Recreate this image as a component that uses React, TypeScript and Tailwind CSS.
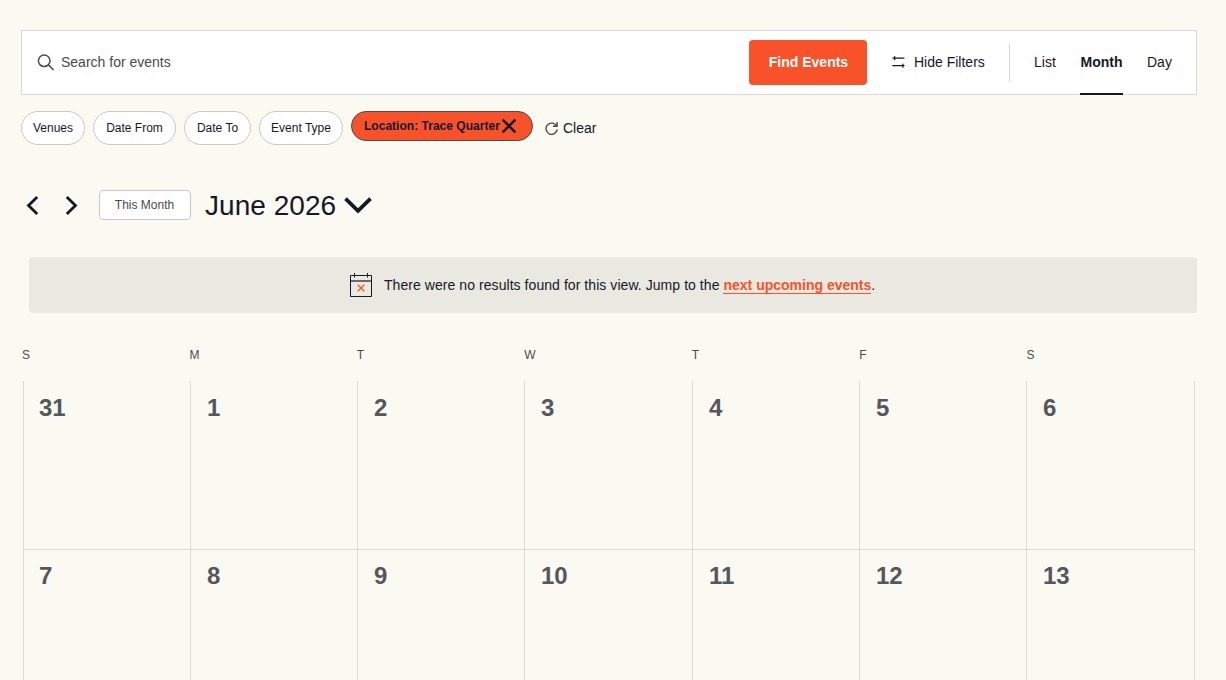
import React from "react";

const filters = [
  { label: "Venues", width: "w-[64px]" },
  { label: "Date From", width: "w-[83px]" },
  { label: "Date To", width: "w-[67px]" },
  { label: "Event Type", width: "w-[84px]" },
];
const weekdays = ["S", "M", "T", "W", "T", "F", "S"];
const weeks = [
  [31, 1, 2, 3, 4, 5, 6],
  [7, 8, 9, 10, 11, 12, 13],
];

function SearchIcon() {
  return (
    <svg className="ml-[15px] size-[18px] shrink-0" viewBox="0 0 18 18" fill="none" stroke="#4a4a4a" strokeWidth="1.5">
      <circle cx="7.2" cy="6.8" r="5.8" />
      <path d="M11.3 10.9L16.6 16" />
    </svg>
  );
}

function FilterIcon() {
  return (
    <svg className="mt-px h-[12px] w-[13px] shrink-0" viewBox="0 0 13 12" fill="none" stroke="#141827" strokeWidth="1.25" strokeLinecap="round">
      <path d="M.8 2.1H12M2.7 .7V3.7M.8 9.6H12M10.9 8V11.2" />
    </svg>
  );
}

function EventsBar() {
  return (
    <div className="flex h-[65px] items-center border border-[#d9d9d9] bg-white text-[14px] leading-[20px]">
      <SearchIcon />
      <span className="ml-[6px] flex-1 pb-[2px] text-[#4a4a4a]">Search for events</span>
      <button className="h-[45px] w-[118px] rounded-[4px] bg-[#f8522b] pb-[2px] pl-px font-bold text-white">Find Events</button>
      <button className="ml-[25px] flex w-[93px] items-center gap-[9px] pb-[2px] whitespace-nowrap">
        <FilterIcon />
        Hide Filters
      </button>
      <div className="ml-[24px] h-[39px] w-px bg-[#d9d9d9]" />
      <nav className="flex h-[65px] items-center pb-px">
        <span className="ml-[24px] w-[22px] whitespace-nowrap">List</span>
        <span className="ml-[24px] flex h-[65px] w-[43px] items-center justify-center border-b-2 border-[#141827] pt-[2px] font-bold">Month</span>
        <span className="mr-[25px] ml-[24px] w-[24px] whitespace-nowrap">Day</span>
      </nav>
    </div>
  );
}

function FilterBar() {
  return (
    <div className="mt-4 flex h-[34px] items-start text-[12px]">
      {filters.map((f) => (
        <button key={f.label} className={`${f.width} mr-2 h-[34px] shrink-0 rounded-full border border-[#c9c9c9] bg-white whitespace-nowrap`}>
          {f.label}
        </button>
      ))}
      <button className="flex h-[30px] w-[182px] shrink-0 items-center rounded-full border border-[#4b4b50] bg-[#f8522b] pl-[12px] font-bold whitespace-nowrap">
        <span className="tracking-[0.02px]">Location: Trace Quarter</span>
        <svg className="ml-[2px] size-[14px]" viewBox="0 0 14 14" fill="none" stroke="#141827" strokeWidth="2.5" strokeLinecap="round">
          <path d="M1.4 1.4L12.6 12.6M12.6 1.4L1.4 12.6" />
        </svg>
      </button>
      <button className="ml-[12px] flex h-[34px] items-center gap-[5px] text-[14px]">
        <svg className="mt-px size-[13px]" viewBox="0 0 13 13" fill="none" stroke="#4a4a4a" strokeWidth="1.4">
          <path d="M11.6 4.1A5.6 5.6 0 1 0 12.2 7.4M12.1 0V4.3H7.9" />
        </svg>
        Clear
      </button>
    </div>
  );
}

function MonthNav() {
  return (
    <div className="mt-[45px] flex h-[30px] items-center">
      <svg className="ml-[5px] h-[20px] w-[13px]" viewBox="0 0 13 20" fill="none" stroke="#141827" strokeWidth="2.8">
        <path d="M11.2 2L2.5 10.5L11.2 19" />
      </svg>
      <svg className="ml-[26px] h-[20px] w-[13px]" viewBox="0 0 13 20" fill="none" stroke="#141827" strokeWidth="2.8">
        <path d="M1.8 2L10.5 10.5L1.8 19" />
      </svg>
      <button className="ml-[21px] h-[30px] w-[92px] rounded-[4px] border border-[#c9c9c9] bg-white pr-px text-[12px] text-[#4a4a4a]">This Month</button>
      <h1 className="ml-[14px] w-[132px] pt-[2px] text-[28px] leading-[30px] tracking-[0.05px] whitespace-nowrap">June 2026</h1>
      <svg className="ml-[7px] h-[18px] w-[28px]" viewBox="0 0 28 18" fill="none" stroke="#141827" strokeWidth="3.8">
        <path d="M1.5 2.6L14 14.8L26.5 2.6" />
      </svg>
    </div>
  );
}

function Notice() {
  return (
    <div className="mt-[37px] ml-[8px] flex h-[56px] items-center rounded-[4px] bg-[#e9e9e1] pl-[321px] text-[14px] whitespace-nowrap">
      <svg className="mb-px h-[25px] w-[22px] shrink-0" viewBox="0 0 22 25" fill="none">
        <path d="M.5 3.5H21.5V24.5H.5ZM4.5 1V5.5M17.5 1V5.5" stroke="#141827" />
        <path d="M1 9H21" stroke="#141827" strokeWidth="1.2" />
        <path d="M7.7 12.8L14.3 19.2M14.3 12.8L7.7 19.2" stroke="#f8522b" strokeWidth="1.3" />
      </svg>
      <p className="ml-[12px]">
        <span className="tracking-[0.06px]">There were no results found for this view. Jump to the </span>
        <a className="border-b border-[#f8522b] font-bold text-[#f8522b]">next upcoming events</a>.
      </p>
    </div>
  );
}

function MonthGrid() {
  return (
    <div className="mt-[33px]">
      <div className="ml-px grid w-[1172px] grid-cols-7 text-[12px] leading-[18px] text-[#4a4a4a]">
        {weekdays.map((d, i) => <span key={i}>{d}</span>)}
      </div>
      <div className="mt-[17px] ml-[2px] w-[1172px] border-l border-[#dadada]">
        {weeks.map((week, i) => (
          <div key={i} className="grid h-[169px] grid-cols-[167px_167px_167px_168px_167px_167px_168px] border-b border-[#dadada] last:h-[168px] last:[&>div]:pt-[10px]">
            {week.map((day) => (
              <div key={day} className="border-r border-[#dadada] pt-[11px] pl-4 text-[24px] leading-[32px] font-bold text-[#56575d] first:pl-[15px]">{day}</div>
            ))}
          </div>
        ))}
      </div>
    </div>
  );
}

export default function App() {
  return (
    <main className="h-[680px] w-full overflow-hidden bg-[#fafaf2] pt-[30px] pr-[29px] pl-[21px] font-['Liberation_Sans',Arial,sans-serif] text-[#141827]">
      <EventsBar />
      <FilterBar />
      <MonthNav />
      <Notice />
      <MonthGrid />
    </main>
  );
}
